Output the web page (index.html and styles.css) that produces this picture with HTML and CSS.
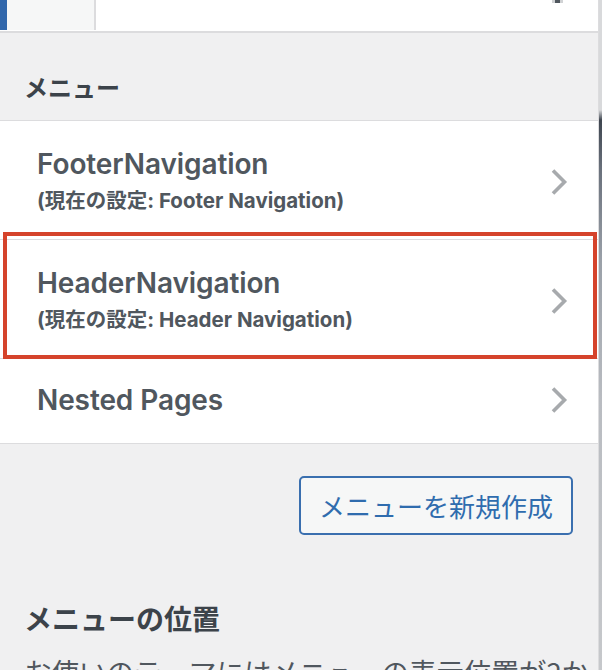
FILE: index.html
```html
<!DOCTYPE html>
<html lang="ja">
<head>
<meta charset="utf-8">
<title>メニュー</title>
<link rel="stylesheet" href="styles.css">
</head>
<body>
<div class="frame">
  <main class="panel">
    <div class="topbar">
      <div class="back"></div>
      <span class="topmark"></span>
    </div>
    <div class="panel-head">
      <h2 class="heading heading-top">メニュー</h2>
    </div>
    <ul class="menus">
      <li class="row">
        <div class="row-text">
          <div class="title">FooterNavigation</div>
          <div class="sub">(現在の設定: Footer Navigation)</div>
        </div>
        <svg class="chev" width="18" height="28" viewBox="0 0 18 28"><path d="M3 2.5 L14.5 14 L3 25.5" fill="none" stroke="#a7aaad" stroke-width="3.6"/></svg>
      </li>
      <li class="row marked">
        <div class="row-text">
          <div class="title">HeaderNavigation</div>
          <div class="sub">(現在の設定: Header Navigation)</div>
        </div>
        <svg class="chev" width="18" height="28" viewBox="0 0 18 28"><path d="M3 2.5 L14.5 14 L3 25.5" fill="none" stroke="#a7aaad" stroke-width="3.6"/></svg>
      </li>
      <li class="row single">
        <div class="row-text">
          <div class="title">Nested Pages</div>
        </div>
        <svg class="chev" width="18" height="28" viewBox="0 0 18 28"><path d="M3 2.5 L14.5 14 L3 25.5" fill="none" stroke="#a7aaad" stroke-width="3.6"/></svg>
      </li>
    </ul>
    <div class="actions">
      <button class="btn" type="button">メニューを新規作成</button>
    </div>
    <section class="locations">
      <h3 class="heading">メニューの位置</h3>
      <p class="desc">お使いのテーマにはメニューの表示位置が2か所あります。</p>
    </section>
  </main>
  <div class="edge"></div>
</div>
</body>
</html>
```
FILE: styles.css
```css
html, body {
  margin: 0;
  padding: 0;
  height: 670px;
  overflow: hidden;
  background: #f0f0f1;
}
body {
  font-family: Inter, "Noto Sans CJK JP", sans-serif;
  color: #50575e;
}
.frame {
  display: flex;
  height: 670px;
}
.panel {
  width: 598px;
  flex: none;
  background: #f0f0f1;
  overflow: hidden;
}
.edge {
  flex: 1;
  border-left: 1px solid #dcdcde;
  background: linear-gradient(#d8d9db 0, #d8d9db 110px, #3f4650 120px, #6a717c 170px, #9aa0a8 260px, #b9bcc1 400px, #c6c8cb 670px);
}
.topbar {
  height: 31px;
  background: #fff;
  border-bottom: 2px solid #dcdcde;
  display: flex;
  align-items: flex-start;
}
.back {
  width: 87px;
  height: 30px;
  background: #f6f7f7;
  border-left: 7px solid #3167ab;
  border-right: 2px solid #dcdcde;
}
.topmark {
  margin-left: auto;
  margin-right: 38px;
  width: 5px;
  height: 3px;
  background: #50575e;
  box-shadow: -3px 0 0 #d0d2d4, 3px 0 0 #d0d2d4;
}
.panel-head {
  padding: 41px 24px 20px;
  border-bottom: 1px solid #dcdcde;
}
.heading {
  margin: 0;
  font-family: "Noto Sans CJK JP", sans-serif;
  font-size: 28px;
  line-height: 30px;
  font-weight: 700;
  color: #3c434a;
}
.heading-top {
  font-size: 24px;
  line-height: 26px;
}
.menus {
  list-style: none;
  margin: 0;
  padding: 0;
  background: #fff;
}
.row {
  position: relative;
  display: flex;
  align-items: center;
  justify-content: space-between;
  padding: 28px 30px 24px 37px;
  border-bottom: 1px solid #dcdcde;
}
.row.single {
  padding-top: 26px;
  padding-bottom: 28px;
}
.title {
  font-size: 28px;
  line-height: 30px;
  font-weight: 600;
  letter-spacing: -0.1px;
  color: #50575e;
}
.sub {
  margin-top: 8px;
  font-family: Inter, "Noto Sans CJK JP", sans-serif;
  font-size: 20.5px;
  line-height: 28px;
  font-weight: 700;
  color: #50575e;
}
.chev {
  display: block;
  flex: none;
}
.marked::after {
  content: "";
  position: absolute;
  left: 3px;
  right: 1px;
  top: -8px;
  bottom: -1px;
  border: 4px solid #d5432b;
  pointer-events: none;
}
.actions {
  display: flex;
  justify-content: flex-end;
  padding: 32px 25px 0;
}
.btn {
  height: 59px;
  width: 274px;
  padding: 0;
  border: 2px solid #3a6faf;
  border-radius: 5px;
  background: #f6f7f7;
  color: #2f6cae;
  font-family: "Noto Sans CJK JP", sans-serif;
  font-size: 26px;
  font-weight: 400;
}
.locations {
  padding: 68px 0 0 24px;
}
.desc {
  margin: 18px 0 0;
  font-family: "Noto Sans CJK JP", sans-serif;
  font-size: 27.5px;
  line-height: 40px;
  color: #50575e;
}
```
